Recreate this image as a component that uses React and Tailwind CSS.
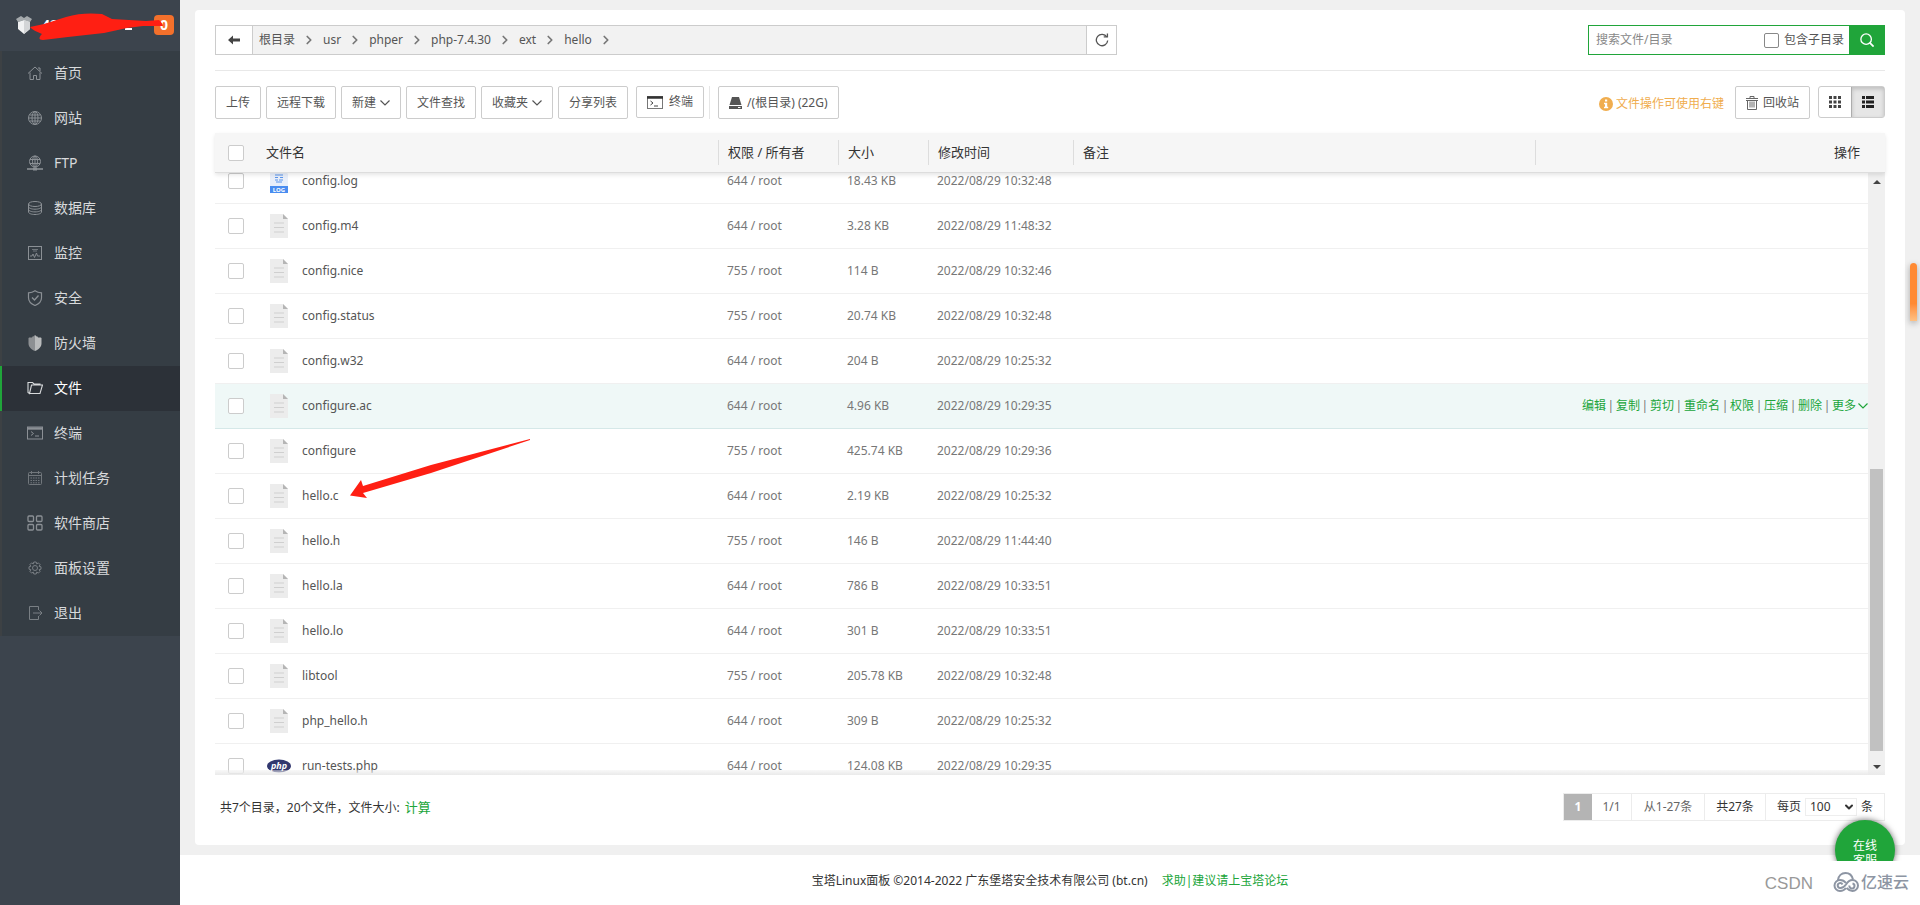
import { useState } from 'react';
import { ChevronRight, ChevronDown } from 'lucide-react';

/* ---------- sidebar icons ---------- */

function Icon({ children, size = 16, className = '' }) {
  return (
    <svg
      width={size}
      height={size}
      viewBox="0 0 16 16"
      fill="none"
      stroke="currentColor"
      strokeWidth="1"
      className={`shrink-0 ${className}`}
      aria-hidden="true"
    >
      {children}
    </svg>
  );
}

const HomeIcon = () => (
  <Icon>
    <path d="M1 8.500 8 2l7 6.500M3 7.500v7h3.500v-4h3v4H13v-7M11 3h2v3" />
  </Icon>
);

const GlobeIcon = () => (
  <Icon>
    <circle cx="8" cy="8" r="6.500" />
    <ellipse cx="8" cy="8" rx="3" ry="6.500" />
    <path d="M8 1.500v13M1.500 8h13M2.500 5h11M2.500 11h11" />
  </Icon>
);

const FtpIcon = () => (
  <Icon>
    <circle cx="8" cy="6.500" r="5.500" />
    <ellipse cx="8" cy="6.500" rx="2.500" ry="5.500" />
    <path d="M8 1v11M3 4.500h10M3 8.500h10" />
    <path d="M0 14h16" strokeWidth="1.600" />
    <path d="M6 14h4" strokeWidth="3" />
  </Icon>
);

const DatabaseIcon = () => (
  <Icon>
    <ellipse cx="8" cy="4" rx="6.500" ry="2.500" />
    <path d="M1.500 4v8c0 1.400 2.900 2.500 6.500 2.500s6.500-1.100 6.500-2.500V4M1.500 6.700c0 1.400 2.900 2.500 6.500 2.500s6.500-1.100 6.500-2.500M1.500 9.400c0 1.400 2.900 2.500 6.500 2.500s6.500-1.100 6.500-2.500" />
  </Icon>
);

const MonitorIcon = () => (
  <Icon>
    <rect x="1.500" y="1.500" width="13" height="13" />
    <path d="M3 11h2l1-2 1.500 3.500L9.500 8l1 3H13" strokeWidth="0.900" />
    <path d="M5 4.500h6M6 6h4" strokeWidth="0.700" />
  </Icon>
);

const ShieldIcon = () => (
  <Icon>
    <path
      d="M8 .8c2 1.500 4.200 2 6.500 2v5c0 3.700-2.700 6.200-6.500 7.700C4.200 14 1.500 11.500 1.500 7.800v-5c2.300 0 4.500-.5 6.500-2Z"
      strokeWidth="1.200"
    />
    <path d="m5 7.500 2.500 2.500 4-4.500" strokeWidth="1.300" />
  </Icon>
);

const FirewallIcon = () => (
  <Icon>
    <path
      d="M8 0v16C4.500 14.500 1.500 12 1.500 8.500V3L3.500 2v1L5.500 2v-.8l.8.3Z"
      fill="#8d9093"
      stroke="none"
    />
    <path
      d="M8 0v16c3.500-1.500 6.500-4 6.500-7.500V3l-2-1v1l-2-1v-.8l-.8.3Z"
      fill="#b9bbbc"
      stroke="none"
    />
  </Icon>
);

const FolderIcon = () => (
  <Icon>
    <path d="M2.500 13.500h10.500l2.500-8.500H4.500L2.500 13.500 1 12.500V2.500h4.500L7 4h6v1" strokeWidth="1.100" />
  </Icon>
);

const TerminalIcon = () => (
  <Icon>
    <rect x=".5" y="2" width="15" height="12" />
    <path d="M1 3.500h14" strokeWidth="2.400" />
    <path d="m4 6.500 2.500 2L4 10.500M8 11h4" />
  </Icon>
);

const CalendarIcon = () => (
  <Icon className="opacity-70">
    <rect x="1.500" y="2.500" width="13" height="12" rx="1" />
    <path d="M1.500 5.500h13M4.500 1v3M11.500 1v3" />
    <path d="M3.500 8h9M3.500 10.500h9M3.500 12.800h9" strokeDasharray="1.500 1" />
  </Icon>
);

const AppsIcon = () => (
  <Icon>
    <g strokeWidth="1.300">
      <rect x="1" y="1" width="5.500" height="5.500" rx="1" />
      <rect x="9.500" y="1" width="5.500" height="5.500" rx="1" />
      <rect x="1" y="9.500" width="5.500" height="5.500" rx="1" />
      <rect x="9.500" y="9.500" width="5.500" height="5.500" rx="1" />
    </g>
  </Icon>
);

const GearIcon = () => (
  <Icon className="opacity-80">
    <circle cx="8" cy="8" r="2.500" />
    <path d="M6.800 1h2.400l.5 1.900 1.700-1 1.700 1.700-1 1.700 1.900.5v2.400l-1.900.5 1 1.700-1.700 1.700-1.700-1-.5 1.900H6.800l-.5-1.900-1.700 1-1.700-1.700 1-1.700L2 8.200V5.800l1.900-.5-1-1.700 1.700-1.700 1.700 1Z" transform="translate(0 1)" />
  </Icon>
);

const ExitIcon = () => (
  <Icon className="opacity-80">
    <path d="M11.500 5V1.500h-9v13h9V11M6 8h9M12.500 5.500 15 8l-2.500 2.500" />
  </Icon>
);

const NAV_ITEMS = [
  { id: 'home', label: '首页', icon: HomeIcon },
  { id: 'site', label: '网站', icon: GlobeIcon },
  { id: 'ftp', label: 'FTP', icon: FtpIcon },
  { id: 'database', label: '数据库', icon: DatabaseIcon },
  { id: 'control', label: '监控', icon: MonitorIcon },
  { id: 'security', label: '安全', icon: ShieldIcon },
  { id: 'firewall', label: '防火墙', icon: FirewallIcon },
  { id: 'files', label: '文件', icon: FolderIcon },
  { id: 'terminal', label: '终端', icon: TerminalIcon },
  { id: 'crontab', label: '计划任务', icon: CalendarIcon },
  { id: 'soft', label: '软件商店', icon: AppsIcon },
  { id: 'config', label: '面板设置', icon: GearIcon },
  { id: 'logout', label: '退出', icon: ExitIcon },
];

const CRUMBS = ['根目录', 'usr', 'phper', 'php-7.4.30', 'ext', 'hello'];

const FILES = [
  { name: 'config.log', mode: '644', size: '18.43 KB', time: '2022/08/29 10:32:48', type: 'log' },
  { name: 'config.m4', mode: '644', size: '3.28 KB', time: '2022/08/29 11:48:32' },
  { name: 'config.nice', mode: '755', size: '114 B', time: '2022/08/29 10:32:46' },
  { name: 'config.status', mode: '755', size: '20.74 KB', time: '2022/08/29 10:32:48' },
  { name: 'config.w32', mode: '644', size: '204 B', time: '2022/08/29 10:25:32' },
  { name: 'configure.ac', mode: '644', size: '4.96 KB', time: '2022/08/29 10:29:35' },
  { name: 'configure', mode: '755', size: '425.74 KB', time: '2022/08/29 10:29:36' },
  { name: 'hello.c', mode: '644', size: '2.19 KB', time: '2022/08/29 10:25:32' },
  { name: 'hello.h', mode: '755', size: '146 B', time: '2022/08/29 11:44:40' },
  { name: 'hello.la', mode: '644', size: '786 B', time: '2022/08/29 10:33:51' },
  { name: 'hello.lo', mode: '644', size: '301 B', time: '2022/08/29 10:33:51' },
  { name: 'libtool', mode: '755', size: '205.78 KB', time: '2022/08/29 10:32:48' },
  { name: 'php_hello.h', mode: '644', size: '309 B', time: '2022/08/29 10:25:32' },
  { name: 'run-tests.php', mode: '644', size: '124.08 KB', time: '2022/08/29 10:29:35', type: 'php' },
];

const ROW_ACTIONS = ['编辑', '复制', '剪切', '重命名', '权限', '压缩', '删除', '更多'];

/* ---------- sidebar ---------- */

function Sidebar({ active, onNavigate }) {
  return (
    <aside className="flex w-[180px] shrink-0 flex-col bg-[#3c444d]">
      <div className="relative flex h-[51px] items-center justify-between pr-[6px] pb-[2px] pl-4">
        <div className="flex items-center gap-[10px] text-sm font-bold text-white">
          <svg width="16" height="20" viewBox="0 0 16 20" aria-hidden="true">
            <path d="M0 4 5 1l3 2 3-2 5 3-2 3-6-2-6 2Z" fill="#a5aaad" />
            <path d="M2 7 8 5l6 2v7l-6 5-6-5Z" fill="#f1f2f3" />
            <path d="M8 5v14l6-5V7Z" fill="#d3d5d7" />
          </svg>
          <span>42</span>
        </div>
        <span className="flex size-5 items-center justify-center rounded bg-[#f3702b] text-sm font-bold text-white">
          0
        </span>
        <svg
          className="absolute top-3 left-[30px]"
          width="136"
          height="30"
          viewBox="0 0 136 30"
          aria-hidden="true"
        >
          <path d="M95 17h7" stroke="#fff" strokeWidth="2" />
          <path
            d="M0 15 14 12 36 5C48 1 62 1 72 2l10 5 34 2c5 0 9-1 13-1 2 2 4 4 4 6l-20 0-16 2-23 5-36 4-25 3c-5 0-4-3-1-6C8 20 2 18 0 15Z"
            fill="#ff1f13"
          />
        </svg>
      </div>
      <nav className="bg-[#353d44]">
        {NAV_ITEMS.map(({ id, label, icon: NavIcon }) => {
          const isActive = active === id;
          return (
            <button
              key={id}
              type="button"
              onClick={() => onNavigate(id)}
              className={`flex h-[45px] w-full items-center gap-[11px] border-l-2 pb-[2px] pl-[25px] text-left text-sm ${
                isActive
                  ? 'border-[#20a53a] bg-[#2c3138] text-white'
                  : 'border-[#3d4144] text-[#d8dadc]'
              }`}
            >
              <span className={isActive ? 'text-[#d8dadc]' : 'text-[#8b9095]'}>
                <NavIcon />
              </span>
              <span>{label}</span>
            </button>
          );
        })}
      </nav>
    </aside>
  );
}

/* ---------- top bars ---------- */

function PathBar() {
  return (
    <div className="flex h-[30px] w-[902px] border border-[#ccc] bg-[#f2f2f2]">
      <button
        type="button"
        aria-label="返回上一级"
        className="flex w-[37px] items-center justify-center border-r border-[#ccc] bg-white"
      >
        <svg width="12" height="10" viewBox="0 0 12 10" fill="#444" aria-hidden="true">
          <path d="M0 5 5 .5v3h7v3H5v3Z" />
        </svg>
      </button>
      <nav className="flex flex-1 items-center pl-[6px]">
        {CRUMBS.map((crumb) => (
          <span key={crumb} className="flex items-center">
            <a href="#" className="text-[#555]">
              {crumb}
            </a>
            <ChevronRight size={14} strokeWidth={3} className="mx-[7px] text-[#777]" />
          </span>
        ))}
      </nav>
      <button
        type="button"
        aria-label="刷新"
        className="flex w-[30px] items-center justify-center border-l border-[#ccc] bg-white"
      >
        <svg width="14" height="14" viewBox="0 0 16 16" fill="none" stroke="#555" strokeWidth="1.500" aria-hidden="true">
          <path d="M13.500 4.500A6.500 6.500 0 1 0 14.500 8.500" />
          <path d="M10 4.500h4.200V.5" />
        </svg>
      </button>
    </div>
  );
}

function SearchBox() {
  return (
    <form
      className="flex h-[30px] w-[297px] border border-[#20a53a] bg-white"
      onSubmit={(e) => e.preventDefault()}
    >
      <input
        type="text"
        aria-label="搜索文件/目录"
        placeholder="搜索文件/目录"
        className="min-w-0 flex-1 pl-[7px] text-[#555] outline-none placeholder:text-[#888]"
      />
      <label className="flex items-center gap-[5px] pr-[5px] text-[#555]">
        <input
          type="checkbox"
          className="size-[15px] appearance-none rounded-[2px] border border-[#888] bg-white"
        />
        包含子目录
      </label>
      <button
        type="submit"
        aria-label="搜索"
        className="flex w-[35px] items-center justify-center bg-[#20a53a]"
      >
        <svg width="14" height="14" viewBox="0 0 16 16" fill="none" stroke="#fff" strokeWidth="1.500" aria-hidden="true">
          <circle cx="7" cy="7" r="6" />
          <path d="m11 11 4.500 4.500" strokeWidth="2" />
        </svg>
      </button>
    </form>
  );
}

function ToolButton({ children, className = 'h-[33px]' }) {
  return (
    <button
      type="button"
      className={`flex items-center rounded-[2px] border border-[#ccc] bg-white px-[10px] text-[#555] ${className}`}
    >
      {children}
    </button>
  );
}

function Caret({ className = '' }) {
  return (
    <svg
      className={className}
      width="10"
      height="6"
      viewBox="0 0 10 6"
      fill="none"
      stroke="currentColor"
      strokeWidth="1.200"
      aria-hidden="true"
    >
      <path d="m.5.5 4.500 4.500L9.500.5" />
    </svg>
  );
}

function Toolbar() {
  return (
    <div className="flex items-start justify-between">
      <div className="flex items-start gap-[5px]">
        <ToolButton>上传</ToolButton>
        <ToolButton>远程下载</ToolButton>
        <ToolButton>
          新建
          <Caret className="ml-1" />
        </ToolButton>
        <ToolButton>文件查找</ToolButton>
        <ToolButton>
          收藏夹
          <Caret className="ml-1" />
        </ToolButton>
        <ToolButton>分享列表</ToolButton>
        <div className="ml-[3px] flex h-[33px] items-start border-r border-[#e6e6e6] pr-[5px]">
          <ToolButton className="h-8 gap-[6px]">
            <svg width="16" height="13" viewBox="0 0 16 13" fill="none" stroke="#777" aria-hidden="true">
              <rect x=".5" y=".5" width="15" height="12" />
              <path d="M0 1.500h16" stroke="#333" strokeWidth="2.500" />
              <path d="m3.500 5 2.500 2-2.500 2M7 10h4" stroke="#444" />
            </svg>
            终端
          </ToolButton>
        </div>
        <div className="ml-[3px]">
          <ToolButton className="h-[33px] gap-[5px]">
            <svg width="13" height="12" viewBox="0 0 13 12" fill="#555" aria-hidden="true">
              <path d="M3 0h7l2.500 8H.5Z" />
              <path d="M0 9h13v3H0Zm9 1v1h2.500v-1Z" fillRule="evenodd" />
            </svg>
            /(根目录) (22G)
          </ToolButton>
        </div>
      </div>

      <div className="flex items-start gap-2">
        <div className="flex h-[33px] items-center gap-[3px] pt-[2px] pr-[3px] text-[#f0ad4e]">
          <svg width="14" height="14" viewBox="0 0 14 14" aria-hidden="true">
            <circle cx="7" cy="7" r="7" fill="#f0ad4e" />
            <path d="M6 2.500h2.200v2H6ZM5 5.800h3.200v4H9.200v1.500H5V9.800h1V7.200H5Z" fill="#fff" />
          </svg>
          文件操作可使用右键
        </div>
        <ToolButton className="h-[33px] gap-[5px]">
          <svg width="12" height="14" viewBox="0 0 12 14" fill="none" stroke="#666" aria-hidden="true">
            <path d="M0 2.500h12M4 2V.5h4V2M1.500 4v9.500h9V4M0 4.500h12M4 5.500v6M6 5.500v6M8 5.500v6" />
          </svg>
          回收站
        </ToolButton>
        <div className="flex h-8 w-[67px] rounded-[3px] border border-[#ccc] bg-white">
          <button type="button" aria-label="图标视图" className="flex flex-1 items-center justify-center">
            <svg width="12" height="12" viewBox="0 0 12 12" fill="#444" aria-hidden="true">
              <path d="M0 0h3v3H0ZM4.500 0h3v3h-3ZM9 0h3v3H9ZM0 4.500h3v3H0ZM4.500 4.500h3v3h-3ZM9 4.500h3v3H9ZM0 9h3v3H0ZM4.500 9h3v3h-3ZM9 9h3v3H9Z" />
            </svg>
          </button>
          <button
            type="button"
            aria-label="列表视图"
            className="flex flex-1 items-center justify-center border-l border-[#adadad] bg-[#e6e6e6] shadow-[inset_0_2px_4px_rgba(0,0,0,0.18)]"
          >
            <svg width="12" height="12" viewBox="0 0 12 12" fill="#222" aria-hidden="true">
              <path d="M0 0h3v3H0ZM4 0h8v3H4ZM0 4.500h3v3H0ZM4 4.500h8v3H4ZM0 9h3v3H0ZM4 9h8v3H4Z" />
            </svg>
          </button>
        </div>
      </div>
    </div>
  );
}

/* ---------- file table ---------- */

function FileIcon({ type }) {
  if (type === 'log') {
    return (
      <svg width="18" height="24" viewBox="0 0 18 24" aria-hidden="true">
        <path d="M0 0h13l5 5v19H0Z" fill="#e9effa" />
        <path d="M5 6h8M5 8.500h3M10 8.500h3M5 11h3M9 11h4M6 13h6" stroke="#5b95ec" fill="none" />
        <path d="M0 17h18v7H0Z" fill="#4a8df0" />
        <text x="9" y="23" textAnchor="middle" fontSize="6" fontWeight="700" fill="#fff">
          LOG
        </text>
      </svg>
    );
  }
  if (type === 'php') {
    return (
      <svg width="24" height="14" viewBox="0 0 24 14" aria-hidden="true">
        <ellipse cx="12" cy="7" rx="12" ry="6.500" fill="#32386f" />
        <text x="12" y="10" textAnchor="middle" fontSize="9" fontWeight="700" fontStyle="italic" fill="#fff">
          php
        </text>
      </svg>
    );
  }
  return (
    <svg width="18" height="24" viewBox="0 0 18 24" aria-hidden="true">
      <path d="M0 0h13l5 5v19H0Z" fill="#ececec" />
      <path d="M13 0v5h5Z" fill="#b5b5b5" />
      <path d="M4 9h10M4 13.500h10M4 18h10" stroke="#cfcfcf" strokeWidth="1.200" />
    </svg>
  );
}

function CheckBox({ label }) {
  return (
    <input
      type="checkbox"
      aria-label={label}
      className="block size-4 appearance-none rounded-[2px] border border-[#ccc] bg-white"
    />
  );
}

function Columns({ actions }) {
  return (
    <colgroup>
      <col className="w-[43px]" />
      <col className="w-[460px]" />
      <col className="w-[120px]" />
      <col className="w-[90px]" />
      <col className="w-[145px]" />
      <col />
      <col className={actions} />
    </colgroup>
  );
}

function HeadCell({ children }) {
  return (
    <th className="p-0 font-normal">
      <div className="flex h-[25px] items-center border-l border-[#ddd] pl-[9px]">{children}</div>
    </th>
  );
}

function RowActions() {
  return (
    <div className="flex items-center justify-end text-[#20a53a]">
      {ROW_ACTIONS.map((action, i) => (
        <span key={action} className="flex items-center">
          {i > 0 && <span className="w-[10px] text-center text-[#777]">|</span>}
          <button type="button">{action}</button>
        </span>
      ))}
      <Caret className="ml-[2px]" />
    </div>
  );
}

function FileTable({ hovered }) {
  return (
    <div className="mt-[14px] flex min-h-0 flex-1 flex-col">
      <table className="z-10 h-10 w-full table-fixed border-b border-[#ddd] bg-[#f6f6f6] text-left text-[13px] text-[#333] shadow-[0_2px_4px_rgba(0,0,0,0.1)]">
        <Columns actions="w-[350px]" />
        <thead>
          <tr>
            <th className="p-0 pl-[13px]">
              <CheckBox label="全选" />
            </th>
            <th className="p-0 pl-2 font-normal">文件名</th>
            <HeadCell>权限 / 所有者</HeadCell>
            <HeadCell>大小</HeadCell>
            <HeadCell>修改时间</HeadCell>
            <HeadCell>备注</HeadCell>
            <th className="p-0 font-normal">
              <div className="flex h-[25px] items-center justify-end border-l border-[#ddd] pr-[25px]">
                操作
              </div>
            </th>
          </tr>
        </thead>
      </table>

      <div className="relative flex min-h-0 flex-1">
        <div className="flex min-h-0 flex-1 flex-col justify-center overflow-hidden">
          <table className="w-full shrink-0 table-fixed text-left text-[#777]">
            <Columns actions="w-[333px]" />
            <tbody>
              {FILES.map((file) => {
                const isHovered = file.name === hovered;
                return (
                  <tr
                    key={file.name}
                    className={`h-[45px] border-b ${
                      isHovered ? 'border-[#d5e8e8] bg-[#eff8f7]' : 'border-[#f0f0f0]'
                    }`}
                  >
                    <td className="p-0 pl-[13px]">
                      <CheckBox label={file.name} />
                    </td>
                    <td className="p-0 pl-[9px]">
                      <div className="flex items-center gap-[11px] text-[#555]">
                        <span className="flex w-6 shrink-0 justify-center">
                          <FileIcon type={file.type} />
                        </span>
                        {file.name}
                      </div>
                    </td>
                    <td className="p-0 pl-[9px]">{file.mode} / root</td>
                    <td className="p-0 pl-[9px]">{file.size}</td>
                    <td className="p-0 pl-[9px]">{file.time}</td>
                    <td className="p-0" />
                    <td className="p-0">{isHovered && <RowActions />}</td>
                  </tr>
                );
              })}
            </tbody>
          </table>
        </div>

        {/* scrollbar */}
        <div className="flex w-[17px] shrink-0 flex-col items-center bg-[#f0f0f0] py-[6px]">
          <span className="mt-px border-x-4 border-b-4 border-x-transparent border-b-[#444]" />
          <div className="flex w-[13px] flex-1 flex-col justify-end py-[14px]">
            <div className="h-[51%] bg-[#c1c1c1]" />
          </div>
          <span className="border-x-4 border-t-4 border-x-transparent border-t-[#444]" />
        </div>
        <div className="pointer-events-none absolute inset-x-0 bottom-0 h-[5px] bg-linear-to-b from-[#eeeeee]/40 to-[#eaeaea]" />
      </div>
    </div>
  );
}

function Pager() {
  return (
    <div className="flex h-[70px] shrink-0 items-start justify-between pt-[18px]">
      <p className="flex h-[30px] items-center pl-[5px] text-[#333]">
        共7个目录，20个文件，文件大小:
        <button type="button" className="ml-[5px] text-[13px] text-[#20a53a]">
          计算
        </button>
      </p>
      <div className="flex h-7 border border-[#ececec] text-[#333]">
        <span className="flex w-7 items-center justify-center bg-[#b4b4b4] font-bold text-white">1</span>
        <span className="flex w-10 items-center justify-center border-r border-[#ececec] text-[#666]">1/1</span>
        <span className="flex w-[73px] items-center justify-center border-r border-[#ececec] text-[#666]">
          从1-27条
        </span>
        <span className="flex w-[61px] items-center justify-center border-r border-[#ececec]">共27条</span>
        <label className="flex w-[118px] items-center justify-center gap-1">
          每页
          <span className="relative flex items-center">
            <select
              defaultValue="100"
              className="h-[18px] w-[52px] appearance-none border border-[#eee] bg-white pl-1 leading-4"
            >
              <option>100</option>
              <option>200</option>
              <option>500</option>
            </select>
            <ChevronDown
              size={12}
              strokeWidth={4}
              className="pointer-events-none absolute right-[2px]"
            />
          </span>
          条
        </label>
      </div>
    </div>
  );
}

/* ---------- floating pieces ---------- */

function PointerArrow() {
  return (
    <svg
      className="pointer-events-none absolute top-[438px] left-[349px]"
      width="183"
      height="62"
      viewBox="0 0 183 62"
      aria-hidden="true"
    >
      <path d="M181 1 82 27 14 48l-2-6L1 57.500 18 60l-4-5L82 35 181 2Z" fill="#ff1f13" />
    </svg>
  );
}

function ServiceButton() {
  return (
    <div className="absolute right-[15px] bottom-[44px] h-[51px] w-20 overflow-hidden px-[10px] pt-[10px]">
      <button
        type="button"
        className="flex size-[60px] flex-col items-center justify-center rounded-full bg-[#20a53a] pt-[5px] leading-[15px] text-white shadow-[0_0_6px_rgba(0,0,0,0.6)]"
      >
        <span>在线</span>
        <span>客服</span>
      </button>
    </div>
  );
}

function Watermarks() {
  return (
    <div className="absolute right-[11px] bottom-[9px] flex items-center">
      <span className="mr-5 pt-1 font-['Liberation_Sans',sans-serif] text-[17px] leading-6 text-[#999]">CSDN</span>
      <svg width="26" height="20" viewBox="0 0 26 20" fill="none" stroke="#8d95a3" strokeWidth="2" aria-hidden="true">
        <path d="M5 8C5.500 4 8.500 1 12.500 1c3.500 0 6.500 2 7.500 6.500" />
        <path d="M9.500 12.500a2.500 2.500 0 1 0-2 3.500c2 0 4-1.500 5.500-3.500 1.500-2.500 3.500-4.500 6.500-4.500a5.500 5.500 0 0 1 0 11c-3 0-4.500-1.500-6-3" />
        <path d="M13 11C11.500 9 9.500 8 7 8a5.500 5.500 0 0 0 0 11c2.500 0 4.500-1 6-3M16.500 13.500a2.500 2.500 0 1 0 3-2" />
      </svg>
      <span className="ml-[2px] text-base leading-6 font-medium text-[#8d95a3]">亿速云</span>
    </div>
  );
}

export default function App() {
  const [active, setActive] = useState('files');

  return (
    <div className="relative flex h-screen overflow-hidden bg-[#f0f0f0] font-['Noto_Sans','Noto_Sans_CJK_SC',sans-serif] text-xs">
      <Sidebar active={active} onNavigate={setActive} />

      <div className="flex min-w-0 flex-1 flex-col">
        <main className="mx-[15px] my-[10px] flex min-h-0 flex-1 flex-col rounded bg-white px-5 pt-[15px]">
          <div className="mb-[15px] flex justify-between border-b border-[#e8e8e8] pb-[15px]">
            <PathBar />
            <SearchBox />
          </div>
          <Toolbar />
          <FileTable hovered="configure.ac" />
          <Pager />
        </main>
        <footer className="flex h-[50px] shrink-0 items-center justify-center gap-[14px] bg-white pt-[2px] text-[#333]">
          <span>宝塔Linux面板 ©2014-2022 广东堡塔安全技术有限公司 (bt.cn)</span>
          <a href="#" className="text-[#20a53a]">
            求助|建议请上宝塔论坛
          </a>
        </footer>
      </div>

      {/* side handle */}
      <div className="absolute top-[263px] right-[3px] h-[58px] w-[7px] rounded-t-full bg-linear-to-b from-[#ff8a33] from-70% to-[#ffc183] shadow-[0_2px_6px_rgba(0,0,0,0.3)]" />
      <PointerArrow />
      <ServiceButton />
      <Watermarks />
    </div>
  );
}
